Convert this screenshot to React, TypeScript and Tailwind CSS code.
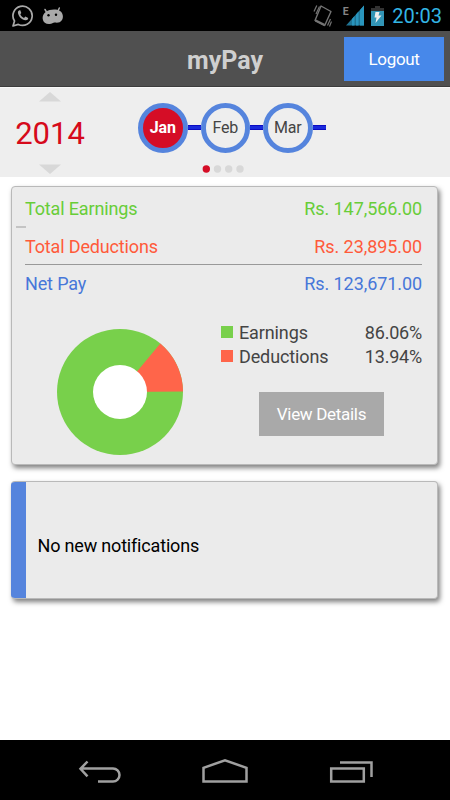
import { useState } from 'react';

const MONTHS = ['Jan', 'Feb', 'Mar'];

const TOTALS = [
  { label: 'Total Earnings', value: 'Rs. 147,566.00', color: 'text-[#68cd38]' },
  { label: 'Total Deductions', value: 'Rs. 23,895.00', color: 'text-[#ff5a3a]' },
  { label: 'Net Pay', value: 'Rs. 123,671.00', color: 'text-[#4777d9]' },
];

const LEGEND = [
  { label: 'Earnings', value: '86.06%', color: 'bg-[#78d04b]' },
  { label: 'Deductions', value: '13.94%', color: 'bg-[#ff654a]' },
];

function StatusBar() {
  return (
    <div className="h-[31px] shrink-0 bg-black flex items-center justify-between pl-3 pr-2">
      <div className="flex items-center gap-2">
        {/* WhatsApp */}
        <svg width="22" height="24" viewBox="0 0 22 24" fill="none">
          <path d="M1 22l1.500-5A9.600 9.600 0 1 1 6.300 20.400z" stroke="#a9a9a9" strokeWidth="1.700" strokeLinejoin="round" />
          <path d="M7.400 6.200c-1.100.4-1.700 1.600-1.400 3 .8 3.700 3.800 6.500 7.500 7 1.500.2 2.600-.6 2.700-2.200l-2.800-1.500-1.400 1.400c-1.700-.7-3-2-3.700-3.600l1-1.200-1-2.800z" fill="#a9a9a9" />
        </svg>
        {/* Android bean */}
        <svg width="23" height="24" viewBox="0 0 23 24">
          <path d="M4.500 8L3 5.500M15.800 7.500L17.300 4" stroke="#a9a9a9" strokeWidth="1.500" strokeLinecap="round" />
          <path d="M4 7.700C7.500 5.200 14.500 4.700 18 7c3 1.800 3.700 6.600 2 9-1.700 2.800-4.500 3-7.200 2.600-1.600-.2-2.700 1.400-5.300 1.400-3.500.2-6.300-1.500-6.800-5-.4-3 .8-5.500 3.300-7.300z" fill="#a9a9a9" />
          <circle cx="6.500" cy="11.200" r="1.200" fill="#000" />
          <circle cx="14" cy="10.700" r="1.200" fill="#000" />
        </svg>
      </div>
      <div className="flex items-center">
        {/* Vibrate */}
        <svg width="20" height="24" viewBox="0 0 20 24" fill="none" stroke="#747474" strokeWidth="1.400">
          <path d="M9 2L19 7.500 12.700 21.500 3 16.500z" strokeLinejoin="round" />
          <path d="M3.500 16.500l9 4.500" strokeWidth="2.500" />
          <path d="M2 7.500L4.800 1.500M4 10L7.500 2.500M15.500 21.500l3-6.500M17.500 22.500l2-5" strokeWidth="1.200" />
        </svg>
        <svg className="ml-[10px]" width="22" height="24" viewBox="0 0 22 24">
          <path d="M4 21.500L22 1.500v20z" fill="#207494" />
          <path d="M10 21.500v-6.500l2.500-3v9.500zM14 21.500V10.500l2.500-3v14zM18 21.500V6l4-4.500v20z" fill="#2995bd" />
          <text x="0.800" y="11" fontFamily="Roboto" fontWeight="700" fontSize="10.500" fill="#858585">E</text>
        </svg>
        <svg className="ml-[7px]" width="14" height="22" viewBox="0 0 14 22">
          <path d="M4 1h5v2h4v5H0V3h4z" fill="#333" />
          <path d="M0 6h13v15H0z" fill="#3295b6" />
          <path d="M4.500 7h4L7.500 10.500H10.500l-6 7.500 1-5.500H3.500z" fill="#eee" />
        </svg>
        <span className="ml-[7px] text-[20px] leading-6 text-[#33b5e5]">20:03</span>
      </div>
    </div>
  );
}

function DonutChart() {
  return (
    <svg width="126" height="126" viewBox="0 0 126 126">
      <circle cx="63" cy="63" r="63" fill="#78d04b" />
      <path d="M63 63L103.300 14.600A63 63 0 0 1 126 62.500z" fill="#ff654a" />
      <circle cx="63" cy="63" r="27" fill="#fff" />
    </svg>
  );
}

function NavBar() {
  return (
    <div className="h-[60px] shrink-0 bg-black">
      <svg width="450" height="60" viewBox="0 0 450 60" fill="none" stroke="#a0a0a0" strokeWidth="2.500">
        <path d="M87.500 21.500l-7 7.300 7 7.500M80.500 28.500H113a6.300 6.300 0 0 1 0 13H98" />
        <path d="M203.500 41.500V27.800L225 20.300l21.500 7.500v13.700z" />
        <path d="M331.200 28.500h32.600v13h-32.600zM340 22.500h31.500V37" />
      </svg>
    </div>
  );
}

export default function App() {
  const [month, setMonth] = useState('Jan');

  return (
    <div className="w-[450px] h-[800px] overflow-hidden bg-white flex flex-col font-['Roboto',sans-serif]">
      <StatusBar />

      <header className="h-[56px] shrink-0 bg-[#505050] border-b border-[#3c3c3c] flex items-center pt-px pr-[6px]">
        <div className="w-[106px]" />
        <h1 className="flex-1 pt-[3px] text-center text-[25px] leading-8 font-bold text-[#cfcfcf]">myPay</h1>
        <button className="w-[100px] h-[44px] pt-px bg-[#4788ea] text-white text-[17px] tracking-[-0.35px]">
          Logout
        </button>
      </header>

      <section className="h-[90px] shrink-0 bg-[#eee] border-t border-[#f8f8f8] flex">
        <div className="w-[100px] flex flex-col items-center justify-between pt-[4px] pb-[3px]">
          <svg width="22" height="10" viewBox="0 0 22 10">
            <path d="M0 9.500L11 0l11 9.500z" fill="#d8d8d8" />
          </svg>
          <span className="pt-[2px] text-[31px] leading-8 text-[#d60a1b]">2014</span>
          <svg width="22" height="10" viewBox="0 0 22 10">
            <path d="M0 0.500L11 10 22 0.500z" fill="#d8d8d8" />
          </svg>
        </div>
        <div className="w-[245px] pl-[38px] pt-[15px]">
          <div className="flex items-center">
            {MONTHS.map(m => (
              <div key={m} className="flex items-center">
                <button
                  onClick={() => setMonth(m)}
                  className={`w-[49.500px] h-[49.500px] pt-px rounded-full border-5 border-[#5584dd] text-[16px] tracking-[-0.2px] ${
                    m === month ? 'bg-[#d50d26] text-white font-bold' : 'text-[#444]'
                  }`}
                >
                  {m}
                </button>
                <div className="w-[13px] h-[5px] bg-[#1a2adb] border-y border-[#0b0bc4]" />
              </div>
            ))}
          </div>
          {/* pager */}
          <svg className="ml-[64px] mt-[12px]" width="44" height="8" viewBox="0 0 44 8" fill="#d8d8d8">
            <circle cx="4.300" cy="4" r="3.700" fill="#d50d26" />
            <circle cx="15.500" cy="4" r="3.700" />
            <circle cx="26.700" cy="4" r="3.700" />
            <circle cx="38" cy="4" r="3.700" />
          </svg>
        </div>
      </section>

      <main className="flex-1 pt-[9px] pl-[11px] pr-[12px]">
        <div className="relative h-[279px] rounded bg-[#ebebeb] border border-[#b9b9b9] shadow-[2px_3px_5px_rgba(0,0,0,0.5)] pl-[13px] pr-[15px]">
          <div className="absolute left-[4px] top-[39px] w-[10px] h-[2px] bg-[#c4c4c4]" />
          {TOTALS.map((t, i) => (
            <div
              key={t.label}
              className={`flex items-center justify-between text-[18px] ${t.color} ${
                i === 0 ? 'h-[41px] pt-[2px]' : i === 1 ? 'h-[37px] border-b border-[#999]' : 'h-[38px] pb-[2px]'
              }`}
            >
              <span className="tracking-[-0.15px]">{t.label}</span>
              <span className="tracking-[-0.08px]">{t.value}</span>
            </div>
          ))}

          <div className="flex pt-[17px]">
            <div className="pl-[32px] pt-[9px] w-[196px] shrink-0">
              <DonutChart />
            </div>
            <div className="flex-1">
              {LEGEND.map(l => (
                <div key={l.label} className="h-[24px] flex items-center text-[18px] text-[#444] tracking-[-0.12px]">
                  <div className={`w-[12px] h-[12px] mr-[6px] ${l.color}`} />
                  <span>{l.label}</span>
                  <span className="ml-auto tracking-[-0.2px]">{l.value}</span>
                </div>
              ))}
              <button className="block ml-[38px] mt-[24px] w-[125px] h-[44px] pt-[2px] bg-[#a9a9a9] text-white text-[17px] tracking-[-0.3px]">
                View Details
              </button>
            </div>
          </div>
        </div>

        <div className="mt-[16px] h-[118px] rounded bg-[#ebebeb] border border-l-0 border-[#b9b9b9] shadow-[2px_3px_5px_rgba(0,0,0,0.5)] overflow-hidden flex items-center">
          <div className="w-[15px] h-full bg-[#5584dd]" />
          <p className="pl-[11.500px] pt-[10px] text-[18px] text-black tracking-[-0.18px]">No new notifications</p>
        </div>
      </main>

      <NavBar />
    </div>
  );
}
